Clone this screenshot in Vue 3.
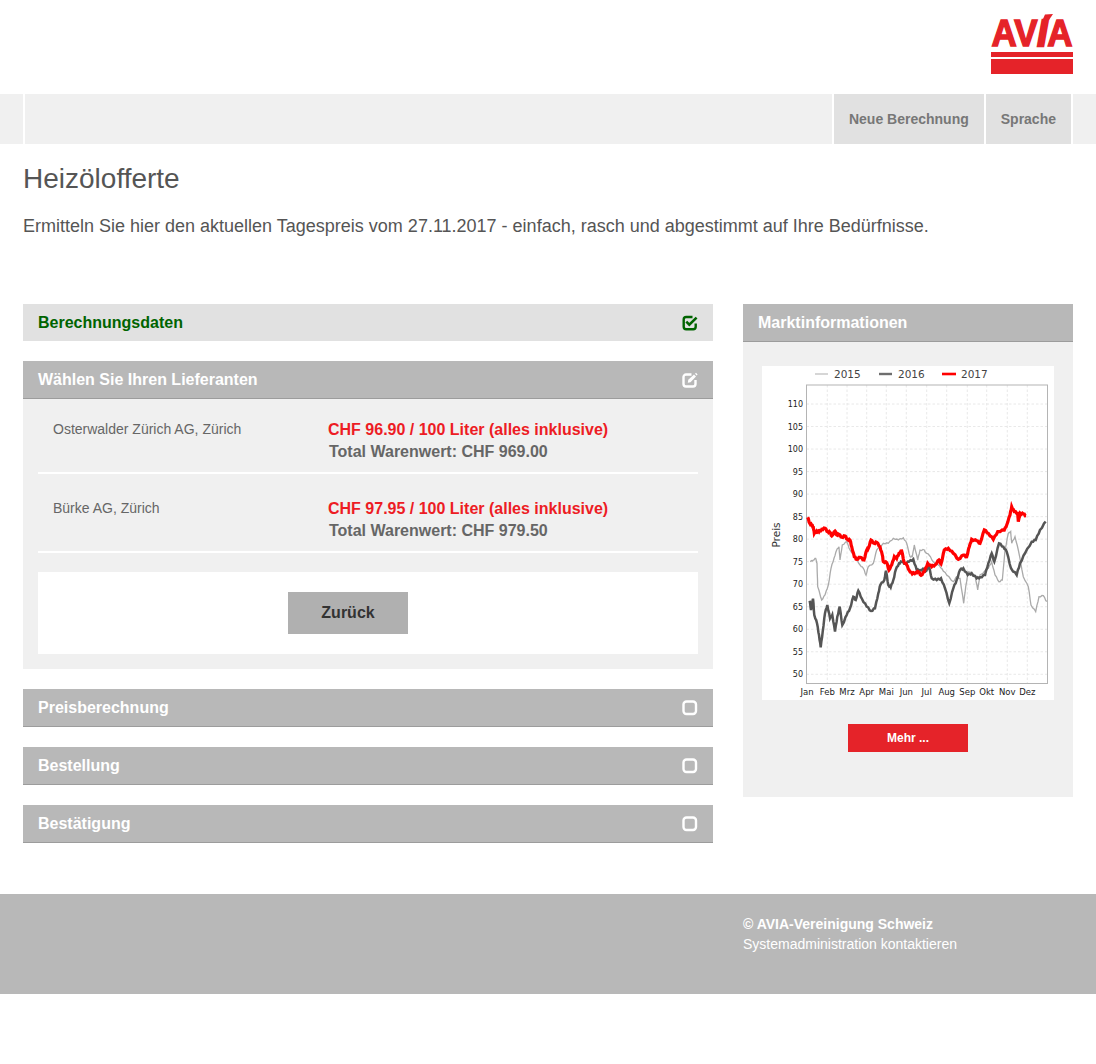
<script setup>
const offers = [
  { name: 'Osterwalder Zürich AG, Zürich', price: 'CHF 96.90 / 100 Liter (alles inklusive)', total: 'Total Warenwert: CHF 969.00' },
  { name: 'Bürke AG, Zürich', price: 'CHF 97.95 / 100 Liter (alles inklusive)', total: 'Total Warenwert: CHF 979.50' }
]

const pendingSteps = ['Preisberechnung', 'Bestellung', 'Bestätigung']

// chart sits at 762,366 in the page, traced values are 3x crops
const part = (ox, pts) => pts.map(([x, y]) => [ox + x / 3, 134 + y / 3])

// daily prices wobble, so add small steps between the traced points
const rough = (pts, amp) => {
  const out = []
  pts.forEach((p, i) => {
    out.push(p)
    const next = pts[i + 1]
    if (next) {
      const wobble = i % 2 ? amp : -amp
      out.push([p[0] + (next[0] - p[0]) * 0.35, p[1] + (next[1] - p[1]) * 0.35 + wobble])
      out.push([p[0] + (next[0] - p[0]) * 0.7, p[1] + (next[1] - p[1]) * 0.7 - wobble])
    }
  })
  return out.map(([x, y]) => `${x.toFixed(1)},${y.toFixed(1)}`).join(' ')
}

const line2015 = rough([
  ...part(43, [[16,185],[25,180],[32,175],[36,190],[38,260],[50,300],[60,285],[70,255],[78,205],[87,175],[95,150],[102,140],[105,180],[112,135],[125,125],[135,150],[150,170],[165,195],[175,205],[183,225],[190,200],[205,190],[215,150],[235,130],[250,130],[265,115],[280,120],[295,113],[305,130],[315,170],[322,170],[328,135],[338,180],[345,150],[358,150]]),
  ...part(163, [[0,155],[12,165],[25,185],[40,195],[50,205],[65,225],[85,245],[95,230],[105,235],[116,310],[122,260],[130,215],[150,225],[158,270],[165,225],[190,205],[200,185],[210,225],[222,245],[232,240],[240,150],[250,100],[257,95],[260,130],[270,110],[280,150],[295,230],[310,260],[318,315],[332,335],[342,290],[355,287],[365,305]])
], 0.5)

const line2016 = rough([
  ...part(43, [[14,302],[18,330],[24,296],[28,345],[36,370],[42,405],[47,442],[53,395],[60,340],[67,315],[75,355],[82,345],[90,395],[97,350],[104,320],[112,375],[125,345],[135,325],[145,290],[152,300],[160,272],[170,295],[185,320],[198,333],[210,325],[220,280],[226,255],[238,240],[243,212],[250,255],[257,262],[265,240],[272,210],[282,190],[290,185],[300,190],[312,185],[325,178],[335,210],[345,210],[358,207]]),
  ...part(163, [[0,215],[12,200],[20,235],[35,240],[48,235],[60,265],[73,310],[85,265],[95,240],[105,210],[115,205],[128,225],[140,220],[155,235],[165,232],[180,225],[190,190],[200,160],[208,185],[222,130],[235,140],[245,155],[258,205],[275,225],[285,190],[300,160],[320,125],[332,120],[345,90],[362,65]])
], 0.7)

const line2017 = rough([
  ...part(43, [[8,52],[14,70],[20,75],[25,82],[28,100],[35,93],[42,96],[50,88],[60,85],[68,95],[75,97],[80,108],[90,93],[95,105],[102,103],[110,112],[120,108],[127,118],[135,120],[140,140],[148,170],[155,178],[165,172],[177,180],[185,150],[190,145],[198,120],[207,130],[215,127],[225,140],[232,165],[235,185],[245,188],[252,210],[260,195],[268,170],[275,175],[282,160],[290,153],[297,185],[305,195],[312,210],[322,222],[332,218],[340,215],[348,226],[358,215]]),
  ...part(163, [[8,190],[20,200],[30,195],[42,180],[48,192],[58,150],[70,145],[85,160],[100,178],[115,165],[125,170],[133,140],[140,118],[155,122],[165,130],[178,90],[190,100],[205,118],[218,95],[238,90],[245,75],[255,45],[260,20],[268,35],[278,40],[280,65],[286,40],[295,42],[303,47]])
], 0.6)

const yTicks = [110, 105, 100, 95, 90, 85, 80, 75, 70, 65, 60, 55, 50].map(v => ({
  label: v,
  y: 308.3 - (v - 50) * 4.505
}))

const months = [
  ['Jan', 45], ['Feb', 65.3], ['Mrz', 85], ['Apr', 104.7], ['Mai', 124.3], ['Jun', 144.3],
  ['Jul', 164.7], ['Aug', 184.7], ['Sep', 205.3], ['Okt', 224.7], ['Nov', 245.3], ['Dez', 265.3]
].map(([label, x]) => ({ label, x }))

const gridX = months.slice(1).map(m => m.x)
</script>

<template>
  <div class="page">
    <header class="top">
      <svg class="logo" width="82" height="60" viewBox="0 0 82 60">
        <text class="logo-text" x="0.5" y="31.5" textLength="81" lengthAdjust="spacingAndGlyphs">AV<tspan class="logo-i" font-style="italic">I</tspan>A</text>
        <polygon points="54,0.5 62,0 58,6 51.5,6" fill="#e52329" />
        <rect x="0" y="38" width="82" height="5" fill="#e52329" />
        <rect x="0" y="45" width="82" height="15" fill="#e52329" />
      </svg>
    </header>

    <nav class="nav">
      <div class="nav-edge"></div>
      <div class="nav-fill"></div>
      <a class="nav-item">Neue Berechnung</a>
      <a class="nav-item">Sprache</a>
      <div class="nav-edge"></div>
    </nav>

    <section class="intro">
      <h1>Heizölofferte</h1>
      <p>Ermitteln Sie hier den aktuellen Tagespreis vom 27.11.2017 - einfach, rasch und abgestimmt auf Ihre Bedürfnisse.</p>
    </section>

    <main class="columns">
      <div class="steps">
        <div class="bar bar-done">
          <span>Berechnungsdaten</span>
          <svg class="icon" width="16" height="16" viewBox="0 0 16 16" fill="none">
            <path d="M10.5 2 H4.2 A2.5 2.5 0 0 0 1.7 4.5 V11.7 A2.5 2.5 0 0 0 4.2 14.2 H11.2 A2.5 2.5 0 0 0 13.7 11.7 V8.5" stroke="#006400" stroke-width="2.4" />
            <path d="M4.3 6.6 L7.3 9.6 L14.6 2.6" stroke="#006400" stroke-width="2.6" />
          </svg>
        </div>

        <div class="step-open">
          <div class="bar">
            <span>Wählen Sie Ihren Lieferanten</span>
            <svg class="icon" width="16" height="16" viewBox="0 0 16 16" fill="none">
              <path d="M9.5 2.5 H4 A2.5 2.5 0 0 0 1.5 5 V12 A2.5 2.5 0 0 0 4 14.5 H11 A2.5 2.5 0 0 0 13.5 12 V8" stroke="#fff" stroke-width="2.4" />
              <path d="M5.8 10.7 L6.3 7.8 L12 2.6 L14 4.6 L8.5 10.2 Z" fill="#fff" />
              <path d="M13 1.8 L14 0.8 L15.6 2.4 L14.6 3.4 Z" fill="#fff" />
            </svg>
          </div>
          <div class="panel">
            <div v-for="offer in offers" :key="offer.name" class="offer">
              <div class="offer-name">{{ offer.name }}</div>
              <div class="offer-price">
                <div class="price">{{ offer.price }}</div>
                <div class="total">{{ offer.total }}</div>
              </div>
            </div>
            <div class="actions">
              <button class="back">Zurück</button>
            </div>
          </div>
        </div>

        <div v-for="step in pendingSteps" :key="step" class="bar">
          <span>{{ step }}</span>
          <svg class="icon" width="16" height="16" viewBox="0 0 16 16" fill="none">
            <rect x="1.5" y="1.5" width="12.5" height="12.5" rx="3" stroke="#fff" stroke-width="2.4" />
          </svg>
        </div>
      </div>

      <aside class="market">
        <div class="bar">
          <span>Marktinformationen</span>
        </div>
        <div class="market-body">
          <svg class="chart" width="292" height="334" viewBox="0 0 292 334">
            <rect width="292" height="334" fill="#fff" />
            <g stroke="#e2e2e2" stroke-width="0.8" stroke-dasharray="2.5 2">
              <line v-for="t in yTicks" :key="t.label" x1="44.5" x2="285.5" :y1="t.y" :y2="t.y" />
              <line v-for="x in gridX" :key="x" :x1="x" :x2="x" y1="19" y2="317" />
            </g>
            <rect x="44.5" y="19" width="241" height="298.5" fill="none" stroke="#b4b4b4" stroke-width="1" />
            <g class="tick">
              <text v-for="t in yTicks" :key="t.label" x="41" :y="t.y + 3" text-anchor="end">{{ t.label }}</text>
              <text v-for="m in months" :key="m.label" class="month" :x="m.x" y="329" text-anchor="middle">{{ m.label }}</text>
            </g>
            <text class="axis" transform="translate(18 169) rotate(-90)" text-anchor="middle">Preis</text>

            <polyline :points="line2015" fill="none" stroke="#aaa" stroke-width="1.3" />
            <polyline :points="line2016" fill="none" stroke="#555" stroke-width="2.5" />
            <polyline :points="line2017" fill="none" stroke="#ff0000" stroke-width="3.2" />

            <g class="legend">
              <line x1="53" x2="66" y1="8" y2="8" stroke="#c4c4c4" stroke-width="1.4" />
              <text x="72" y="11.5">2015</text>
              <line x1="117" x2="130" y1="8" y2="8" stroke="#6e6e6e" stroke-width="2.4" />
              <text x="136" y="11.5">2016</text>
              <line x1="180" x2="194" y1="8" y2="8" stroke="#ff0000" stroke-width="2.6" />
              <text x="199" y="11.5">2017</text>
            </g>
          </svg>
          <button class="more">Mehr ...</button>
        </div>
      </aside>
    </main>

    <footer class="footer">
      <div class="footer-col">
        <div class="copyright">© AVIA-Vereinigung Schweiz</div>
        <div>Systemadministration kontaktieren</div>
      </div>
    </footer>
  </div>
</template>

<style>
html,
body {
  margin: 0;
  background: #fff;
}
</style>

<style scoped>
.page {
  width: 1096px;
  min-height: 1064px;
  font-family: "Liberation Sans", Arial, sans-serif;
  color: #555;
}

.top {
  height: 94px;
  display: flex;
  justify-content: flex-end;
  padding: 14px 23px 0 0;
  box-sizing: border-box;
}

.logo-text {
  font-family: "Liberation Sans", Arial, sans-serif;
  font-weight: 700;
  font-size: 36px;
  fill: #e52329;
  stroke: #e52329;
  stroke-width: 1.4px;
}

.logo-i {
  stroke-width: 2.6px;
}

.nav {
  display: flex;
  gap: 2px;
  height: 50px;
}

.nav-edge {
  width: 23px;
  background: #f0f0f0;
}

.nav-fill {
  flex: 1;
  background: #f0f0f0;
}

.nav-item {
  display: flex;
  align-items: center;
  justify-content: center;
  padding: 0 15px;
  background: #e1e1e1;
  color: #777;
  font-weight: 700;
  font-size: 14px;
}

.intro {
  padding: 0 23px;
  height: 160px;
}

h1 {
  margin: 0;
  padding-top: 18px;
  font-size: 28px;
  line-height: 33px;
  font-weight: 400;
  color: #555;
}

.intro p {
  margin: 0;
  padding-top: 19px;
  font-size: 18px;
  line-height: 24px;
}

.columns {
  display: flex;
  gap: 30px;
  padding: 0 23px;
  align-items: flex-start;
}

.steps {
  width: 690px;
  display: flex;
  flex-direction: column;
  gap: 20px;
}

.bar {
  display: flex;
  align-items: center;
  justify-content: space-between;
  height: 38px;
  box-sizing: border-box;
  padding: 0 15px;
  background: #b8b8b8;
  border-bottom: 1px solid #9c9c9c;
  color: #fff;
  font-weight: 700;
  font-size: 16px;
}

.bar-done {
  height: 37px;
  background: #e1e1e1;
  border-bottom: 0;
  color: #006400;
}

.icon {
  flex: none;
}

.panel {
  background: #f0f0f0;
  padding: 0 15px 15px;
  height: 270px;
  box-sizing: border-box;
}

.offer {
  display: flex;
  height: 75px;
  padding-top: 19px;
  box-sizing: border-box;
  border-bottom: 2px solid #fff;
}

.offer + .offer {
  height: 79px;
  padding-top: 23px;
}

.offer-name {
  width: 290px;
  padding-left: 15px;
  box-sizing: border-box;
  font-size: 14px;
  line-height: 22px;
  color: #666;
}

.offer-price {
  padding-top: 1px;
  font-weight: 700;
  font-size: 16px;
  line-height: 22px;
}

.price {
  color: #ed1c24;
}

.total {
  padding-left: 1px;
  color: #666;
}

.actions {
  display: flex;
  align-items: center;
  height: 82px;
  margin-top: 19px;
  padding-left: 250px;
  background: #fff;
}

.back {
  width: 120px;
  height: 42px;
  border: 0;
  background: #b0b0b0;
  color: #333;
  font-family: inherit;
  font-weight: 700;
  font-size: 16px;
}

.market {
  width: 330px;
}

.market-body {
  display: flex;
  flex-direction: column;
  align-items: center;
  height: 455px;
  box-sizing: border-box;
  padding-top: 24px;
  background: #f0f0f0;
}

.chart {
  display: block;
  flex: none;
}

.tick text {
  font-family: "DejaVu Sans", sans-serif;
  font-size: 8px;
  fill: #222;
}

.tick .month {
  font-size: 8.5px;
}

.axis {
  font-family: "DejaVu Sans", sans-serif;
  font-size: 10.5px;
  fill: #333;
}

.legend text {
  font-family: "DejaVu Sans", sans-serif;
  font-size: 10.5px;
  fill: #444;
}

.more {
  width: 120px;
  height: 28px;
  margin-top: 24px;
  border: 0;
  background: #e52329;
  color: #fff;
  font-family: inherit;
  font-weight: 700;
  font-size: 12px;
}

.footer {
  margin-top: 51px;
  height: 100px;
  background: #b8b8b8;
  padding: 20px 0 0 743px;
  box-sizing: border-box;
  color: #fff;
  font-size: 14px;
  line-height: 20px;
}

.copyright {
  font-weight: 700;
}
</style>
